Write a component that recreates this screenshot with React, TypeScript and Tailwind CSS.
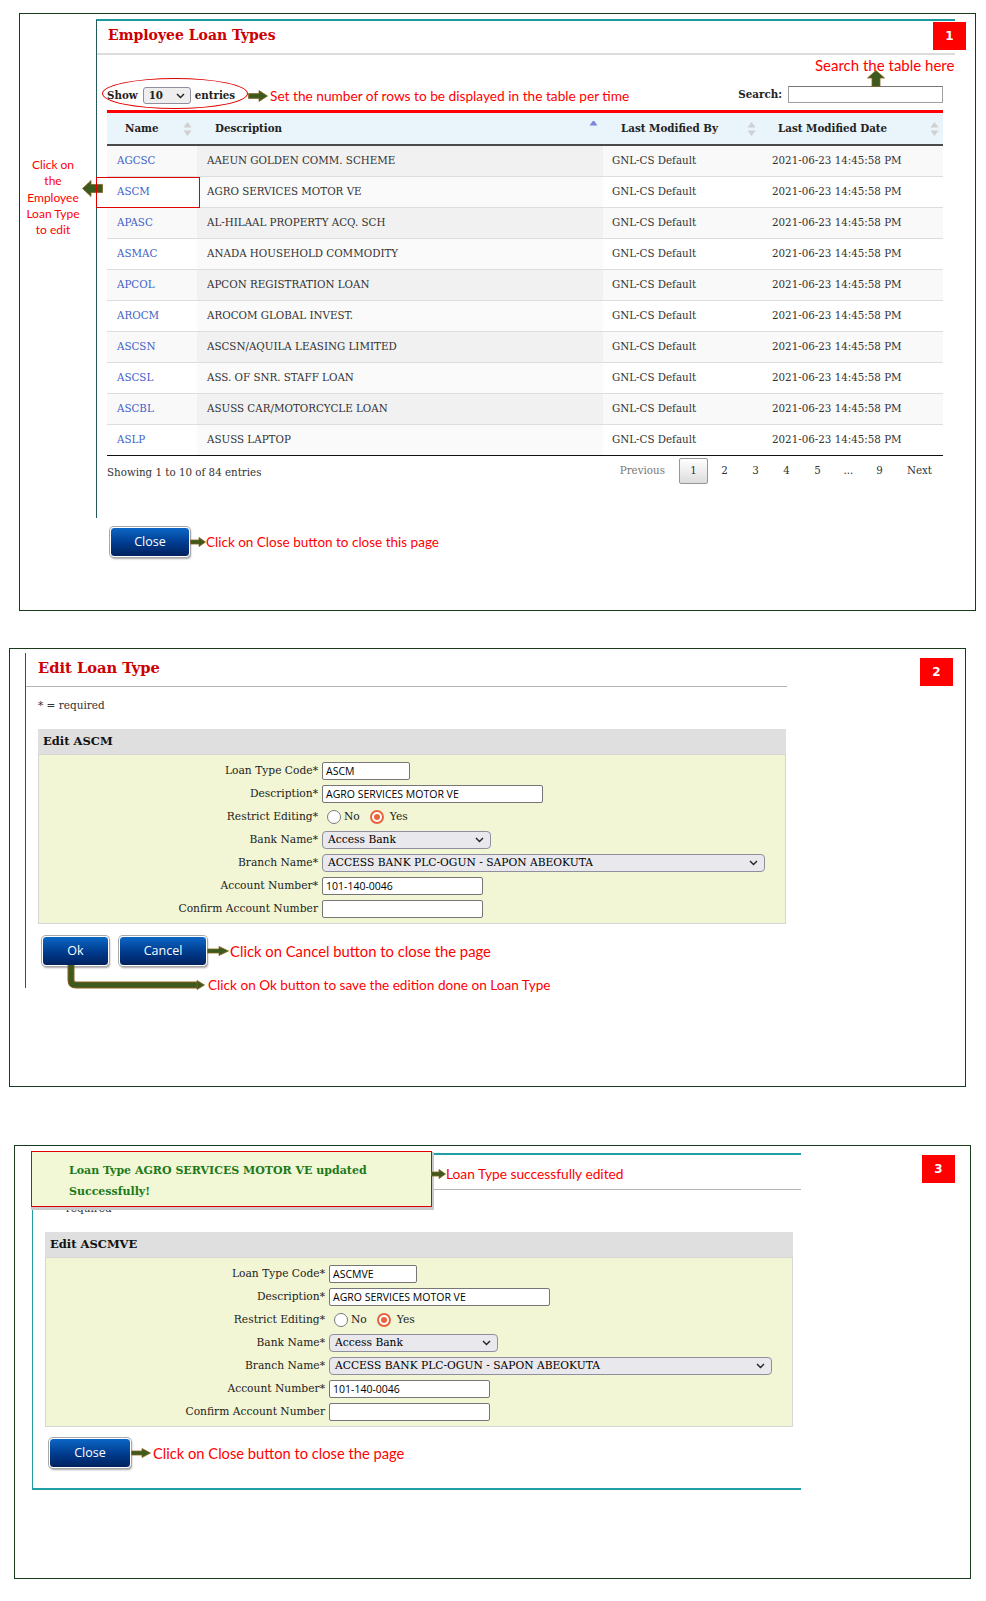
import React from 'react';

const rows = [
  ['AGCSC', 'AAEUN GOLDEN COMM. SCHEME'],
  ['ASCM', 'AGRO SERVICES MOTOR VE'],
  ['APASC', 'AL-HILAAL PROPERTY ACQ. SCH'],
  ['ASMAC', 'ANADA HOUSEHOLD COMMODITY'],
  ['APCOL', 'APCON REGISTRATION LOAN'],
  ['AROCM', 'AROCOM GLOBAL INVEST.'],
  ['ASCSN', 'ASCSN/AQUILA LEASING LIMITED'],
  ['ASCSL', 'ASS. OF SNR. STAFF LOAN'],
  ['ASCBL', 'ASUSS CAR/MOTORCYCLE LOAN'],
  ['ASLP', 'ASUSS LAPTOP'],
];

function ArrowRight({ w = 20, h = 12 }: { w?: number; h?: number }) {
  const s = Math.round(w * 0.55);
  return (
    <svg width={w} height={h} viewBox={`0 0 ${w} ${h}`} className="shrink-0">
      <polygon
        points={`0.5,${h * 0.3} ${s},${h * 0.3} ${s},0.5 ${w - 0.5},${h / 2} ${s},${h - 0.5} ${s},${h * 0.7} 0.5,${h * 0.7}`}
        fill="#3d5a1e"
        stroke="#8a6222"
        strokeWidth="0.8"
      />
    </svg>
  );
}

function Badge({ n }: { n: string }) {
  return (
    <div className="w-[33px] h-[28px] bg-[#ff0000] text-white font-bold text-[12px] flex items-center justify-center font-['DejaVu_Sans',sans-serif]">
      {n}
    </div>
  );
}

function Btn({ label, w }: { label: string; w: number }) {
  return (
    <div
      style={{ width: w }}
      className="h-[30px] rounded-[4px] border border-white bg-[linear-gradient(to_bottom,#0b67c6,#003a8c_55%,#00225f)] shadow-[0_0_0_1px_#a8a8a8,1px_2px_2px_rgba(0,0,0,0.35)] flex items-center justify-center text-white text-[12.5px] font-['Open_Sans',sans-serif]"
    >
      {label}
    </div>
  );
}

function SortBoth() {
  return (
    <svg width="9" height="16" viewBox="0 0 9 16" className="shrink-0">
      <polygon points="0.5,6.5 4.5,1 8.5,6.5" fill="#d0d0d0" />
      <polygon points="0.5,9.5 4.5,15 8.5,9.5" fill="#d0d0d0" />
    </svg>
  );
}

function Chevron() {
  return (
    <svg width="9" height="6" viewBox="0 0 9 6" className="shrink-0">
      <path d="M1 1 L4.5 4.5 L8 1" fill="none" stroke="#222" strokeWidth="1.4" />
    </svg>
  );
}

function Input({ w, value }: { w: number; value?: string }) {
  return (
    <div
      style={{ width: w }}
      className="h-[18px] border border-[#767676] rounded-[2px] bg-white pl-[3px] text-[10.5px] leading-[16px] text-black font-['Open_Sans',sans-serif]"
    >
      {value}
    </div>
  );
}

function Select({ w, value }: { w: number; value: string }) {
  return (
    <div
      style={{ width: w }}
      className="h-[18px] border border-[#8f8f9d] rounded-[4px] bg-[#e9e9ed] pl-[5px] pr-[6px] flex items-center justify-between text-[10.7px] text-black"
    >
      <span>{value}</span>
      <Chevron />
    </div>
  );
}

function EditForm({ code, desc }: { code: string; desc: string }) {
  const label = 'text-right text-[10.7px] leading-[18px] text-[#222]';
  return (
    <div className="ml-[12px] mt-[16px] w-[748px] font-['DejaVu_Serif',serif]">
      <div className="h-[25px] bg-[#dfdfdf] pl-[5px] flex items-center font-bold text-[11.5px] text-[#111]">Edit {code}</div>
      <div className="border border-[#d6d6d6] bg-[#f2f6d5] pt-[7px] pb-[5px] grid grid-cols-[279px_1fr] gap-x-[4px] gap-y-[5px]">
        <div className={label}>Loan Type Code*</div>
        <Input w={88} value={code} />
        <div className={label}>Description*</div>
        <Input w={221} value={desc} />
        <div className={label}>Restrict Editing*</div>
        <div className="h-[18px] flex items-center text-[10.7px] text-[#222]">
          <div className="ml-[5px] w-[14px] h-[14px] rounded-full border-[1.5px] border-[#7a7a7a] bg-white" />
          <span className="ml-[3px]">No</span>
          <div className="ml-[10px] w-[14px] h-[14px] rounded-full border-2 border-[#e8643c] bg-white flex items-center justify-center">
            <div className="w-[6px] h-[6px] rounded-full bg-[#e8643c]" />
          </div>
          <span className="ml-[6px]">Yes</span>
        </div>
        <div className={label}>Bank Name*</div>
        <Select w={169} value="Access Bank" />
        <div className={label}>Branch Name*</div>
        <Select w={443} value="ACCESS BANK PLC-OGUN - SAPON ABEOKUTA" />
        <div className={label}>Account Number*</div>
        <Input w={161} value="101-140-0046" />
        <div className={label}>Confirm Account Number</div>
        <Input w={161} />
      </div>
    </div>
  );
}

function FormHead({ tall, title }: { tall?: boolean; title?: boolean }) {
  return (
    <>
      <div
        className={`${tall ? 'h-[35px]' : 'h-[34px]'} border-b border-[#b4b4b4] pl-[12px] pt-[5px] leading-[20px] text-[14.7px] font-bold text-[#cc0000] font-['DejaVu_Serif',serif]`}
      >
        {title ? 'Edit Loan Type' : null}
      </div>
      <div className="pl-[12px] mt-[10px] leading-[16px] text-[10.5px] text-[#333] font-['DejaVu_Serif',serif]">* = required</div>
    </>
  );
}

const note = "font-['Lato',sans-serif] text-[#ff0000] whitespace-nowrap";

export default function App() {
  return (
    <div className="w-[986px] h-[1601px] bg-white overflow-hidden font-['DejaVu_Serif',serif]">
      {/* Panel 1 */}
      <div className="ml-[19px] mt-[13px] w-[957px] h-[598px] border border-[#1b3a1b] relative flex">
        <div className={`w-[76px] pr-[10px] pt-[143px] text-center text-[12px] leading-[16.3px] ${note} whitespace-normal`}>
          Click on
          <br />
          the
          <br />
          Employee
          <br />
          Loan Type
          <br />
          to edit
        </div>
        <div className="w-[859px] flex flex-col">
          <div className="mt-[5px] h-[499px] border-l border-t-2 border-[#245a5a] border-t-[#1a9a9c]">
            <div className="h-[34px] border-b-2 border-[#dcdcdc] pl-[11px] pt-[4px] leading-[20px] text-[14px] font-bold text-[#cc0000]">
              Employee Loan Types
            </div>
            <div className="h-[55px] pl-[10px] pr-[12px] pb-[6px] flex items-end justify-between text-[10.3px] text-[#222]">
              <div className="flex items-center h-[17px] font-bold">
                <span>Show</span>
                <div className="ml-[5px] w-[48px] h-[17px] border border-[#8f8f9d] rounded-[3px] bg-[#eeeeee] pl-[5px] pr-[5px] flex items-center justify-between">
                  <span>10</span>
                  <Chevron />
                </div>
                <span className="ml-[4px]">entries</span>
              </div>
              <div className="flex items-center h-[17px] mb-[1px]">
                <span className="font-bold">Search:</span>
                <div className="ml-[6px] w-[155px] h-[17px] border border-[#a0a0a0] border-t-[#777] bg-white" />
              </div>
            </div>
            <div className="ml-[10px] mr-[12px] h-[3px] bg-[#ff0000]" />
            <div className="ml-[10px] mr-[12px] text-[10.3px]">
              <div className="grid grid-cols-[90px_406px_157px_183px] h-[33px] bg-[#e9f4fb] border-b-2 border-[#4a4a4a] font-bold text-[#222]">
                <div className="pl-[18px] pr-[5px] flex items-center justify-between">
                  <span>Name</span>
                  <SortBoth />
                </div>
                <div className="pl-[18px] pr-[5px] flex items-center justify-between">
                  <span>Description</span>
                  <svg width="9" height="16" viewBox="0 0 9 16" className="shrink-0">
                    <polygon points="0.5,4.5 4.5,-1 8.5,4.5" fill="#7f86d9" />
                  </svg>
                </div>
                <div className="pl-[18px] pr-[4px] flex items-center justify-between">
                  <span>Last Modified By</span>
                  <SortBoth />
                </div>
                <div className="pl-[18px] pr-[4px] flex items-center justify-between">
                  <span>Last Modified Date</span>
                  <SortBoth />
                </div>
              </div>
              {rows.map(([code, desc], i) => (
                <div
                  key={code}
                  className={`grid grid-cols-[90px_406px_157px_183px] ${i === 0 ? 'h-[30px]' : 'h-[31px] border-t border-[#dddddd]'} ${
                    i === 9 ? 'h-[32px] border-b border-b-[#111]' : ''
                  } ${i % 2 === 0 ? 'bg-[#f9f9f9]' : 'bg-white'}`}
                >
                  <div className="pl-[10px] flex items-center text-[#3f5fc8]">{code}</div>
                  <div className={`pl-[10px] flex items-center text-[#333] ${i % 2 === 0 ? 'bg-[#f1f1f1]' : 'bg-[#fafafa]'}`}>{desc}</div>
                  <div className="pl-[9px] flex items-center text-[#333]">GNL-CS Default</div>
                  <div className="pl-[12px] flex items-center text-[#333]">2021-06-23 14:45:58 PM</div>
                </div>
              ))}
              <div className="pt-[2px] flex justify-between items-start text-[#333]">
                <div className="mt-[6px] leading-[16px]">Showing 1 to 10 of 84 entries</div>
                <div className="flex items-center h-[26px]">
                  <div className="px-[12px] text-[#777]">Previous</div>
                  <div className="w-[29px] h-[26px] ml-[2px] border border-[#979797] rounded-[2px] bg-[linear-gradient(to_bottom,#ffffff,#dcdcdc)] flex items-center justify-center">1</div>
                  {['2', '3', '4', '5', '...', '9'].map((p) => (
                    <div key={p} className="w-[29px] ml-[2px] text-center">
                      {p}
                    </div>
                  ))}
                  <div className="ml-[2px] px-[11px]">Next</div>
                </div>
              </div>
            </div>
          </div>
          <div className="mt-[9px] pl-[14px] flex items-center">
            <Btn label="Close" w={80} />
            <ArrowRight w={16} h={10} />
            <span className={`${note} text-[13.5px]`}>Click on Close button to close this page</span>
          </div>
        </div>

        {/* overlays */}
        <div className="absolute left-[913px] top-[8px]">
          <Badge n="1" />
        </div>
        <div className="absolute left-[82px] top-[64px] w-[146px] h-[31px] rounded-[50%] border border-[#e00000]" />
        <div className="absolute left-[228px] top-[73px] h-[18px] flex items-center">
          <ArrowRight w={20} h={12} />
          <span className={`${note} text-[13.7px] ml-[2px]`}>Set the number of rows to be displayed in the table per time</span>
        </div>
        <div className={`absolute left-[795px] top-[42px] leading-[18px] text-[15px] ${note}`}>Search the table here</div>
        <svg className="absolute left-[847px] top-[56px]" width="18" height="17" viewBox="0 0 18 17">
          <polygon points="9,0.5 17.5,8 13,8 13,16.5 5,16.5 5,8 0.5,8" fill="#3d5a1e" stroke="#8a6222" strokeWidth="0.8" />
        </svg>
        <svg className="absolute left-[62px] top-[166px]" width="21" height="17" viewBox="0 0 21 17">
          <polygon points="0.5,8.5 9,0.5 9,4.5 20.5,4.5 20.5,12.5 9,12.5 9,16.5" fill="#3d5a1e" stroke="#8a6222" strokeWidth="0.8" />
        </svg>
        <div className="absolute left-[76px] top-[163px] w-[104px] h-[31px] border border-[#e00000]" />
      </div>

      {/* Panel 2 */}
      <div className="ml-[9px] mt-[37px] w-[957px] h-[439px] border border-[#1b3a1b] relative">
        <div className="ml-[15px] mt-[4px] w-[762px] h-[335px] border-l border-[#2b5a4a]">
          <FormHead title />
          <EditForm code="ASCM" desc="AGRO SERVICES MOTOR VE" />
          <div className="relative mt-[12px] pl-[16px] flex items-center">
            <Btn label="Ok" w={67} />
            <div className="ml-[10px]">
              <Btn label="Cancel" w={88} />
            </div>
            <ArrowRight w={22} h={10} />
            <span className={`${note} text-[14.8px] ml-[1px]`}>Click on Cancel button to close the page</span>
            <svg className="absolute left-[40px] top-[29px]" width="140" height="26" viewBox="0 0 140 26">
              <path d="M5 0 V15 Q5 20 10 20 H132" fill="none" stroke="#8a6222" strokeWidth="7" />
              <path d="M5 0 V15 Q5 20 10 20 H132" fill="none" stroke="#3d5a1e" strokeWidth="5" />
              <polygon points="131,15.5 138.5,20 131,24.5" fill="#3d5a1e" stroke="#8a6222" strokeWidth="0.8" />
            </svg>
            <span className={`absolute left-[182px] top-[40px] leading-[18px] text-[13.6px] ${note}`}>
              Click on Ok button to save the edition done on Loan Type
            </span>
          </div>
        </div>
        <div className="absolute left-[910px] top-[9px]">
          <Badge n="2" />
        </div>
      </div>

      {/* Panel 3 */}
      <div className="ml-[14px] mt-[58px] w-[957px] h-[434px] border border-[#1b3a1b] relative">
        <div className="ml-[17px] mt-[7px] w-[769px] border-l border-t-2 border-b-2 border-[#1f9ea4] pb-[20px]">
          <FormHead tall />
          <EditForm code="ASCMVE" desc="AGRO SERVICES MOTOR VE" />
          <div className="mt-[11px] pl-[16px] flex items-center">
            <Btn label="Close" w={82} />
            <ArrowRight w={20} h={10} />
            <span className={`${note} text-[14.7px] ml-[2px]`}>Click on Close button to close the page</span>
          </div>
        </div>
        <div className="absolute left-[16px] top-[5px] w-[401px] h-[56px] border border-[#e00000] bg-[#f2f7d5] shadow-[1px_2px_0_1px_#c9c9c9] pl-[37px] pt-[8px] text-[11px] leading-[21px] font-bold text-[#1b7a1b]">
          Loan Type AGRO SERVICES MOTOR VE updated
          <br />
          Successfully!
        </div>
        <div className="absolute left-[416px] top-[19px] h-[18px] flex items-center">
          <ArrowRight w={15} h={10} />
          <span className={`${note} text-[13.75px]`}>Loan Type successfully edited</span>
        </div>
        <div className="absolute left-[907px] top-[9px]">
          <Badge n="3" />
        </div>
      </div>
    </div>
  );
}
